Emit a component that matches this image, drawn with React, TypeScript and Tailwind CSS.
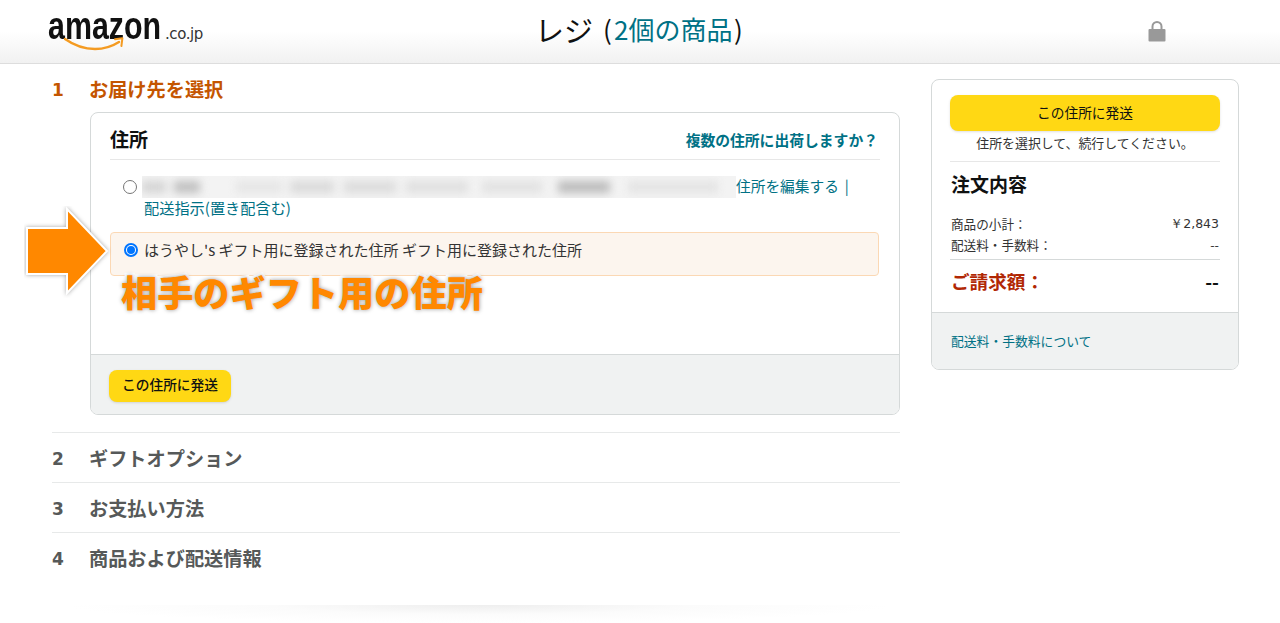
import React from "react";

const font = { fontFamily: '"Noto Sans CJK JP", "Noto Sans", sans-serif' };

function Logo() {
  return (
    <div className="relative w-[170px] h-[52px] mt-[7px] ml-[48px]">
      <div className="flex items-baseline">
        <span className="text-[38px] leading-[38px] font-bold text-[#111] [font-family:'Liberation_Sans',sans-serif] [transform:scaleX(0.8)] origin-left block w-[117px]">amazon</span>
        <span className="text-[15px] leading-[15px] text-[#333] [font-family:'DejaVu_Sans',sans-serif] tracking-[-0.4px]">.co.jp</span>
      </div>
      <svg className="absolute left-[16px] top-[30px]" width="62" height="16" viewBox="0 0 62 16" fill="none">
        <path d="M1 2C11 9 21 12 31 12C40 12 48 9.5 55 5" stroke="#f49b22" strokeWidth="2.4" strokeLinecap="round" />
        <path d="M51 2.2L58.4 1.2L57.4 9" stroke="#f49b22" strokeWidth="2" strokeLinejoin="round" strokeLinecap="round" />
      </svg>
    </div>
  );
}

function Step({ n, label }: { n: number; label: string }) {
  return (
    <div className="flex items-center h-[50px] border-t border-[#e7e9e9]">
      <span className="w-[37px] pt-[4px] text-[17px] font-bold text-[#565959] [font-family:'DejaVu_Sans',sans-serif]">{n}</span>
      <span className="pt-[2px] text-[19.2px] font-bold text-[#565959]">{label}</span>
    </div>
  );
}

function Blurred() {
  const bars = [
    ["w-[24px]", "bg-[#d4d4d4]"], ["w-[8px]", "bg-transparent"], ["w-[26px]", "bg-[#c0c0c0]"], ["w-[36px]", "bg-transparent"],
    ["w-[46px]", "bg-[#e6e6e6]"], ["w-[8px]", "bg-transparent"], ["w-[44px]", "bg-[#dadada]"], ["w-[10px]", "bg-transparent"],
    ["w-[52px]", "bg-[#dcdcdc]"], ["w-[10px]", "bg-transparent"], ["w-[62px]", "bg-[#e0e0e0]"], ["w-[14px]", "bg-transparent"],
    ["w-[60px]", "bg-[#e2e2e2]"], ["w-[16px]", "bg-transparent"], ["w-[52px]", "bg-[#bcbcbc]"], ["w-[18px]", "bg-transparent"],
    ["w-[90px]", "bg-[#e4e4e4]"],
  ];
  return (
    <div className="w-[594px] h-[22px] bg-[#f3f3f3] overflow-hidden shrink-0">
      <div className="flex h-[12px] mt-[5px] blur-[4px]">
        {bars.map(([w, c], i) => (
          <div key={i} className={`${w} ${c} shrink-0 h-full`} />
        ))}
      </div>
    </div>
  );
}

export default function App() {
  return (
    <div style={font} className="relative w-[1280px] h-[623px] overflow-hidden bg-white text-[#0f1111]">
      <header className="h-[64px] border-b border-[#dddddd] bg-gradient-to-b from-white via-white to-[#f1f1f1] flex relative">
        <Logo />
        <div className="absolute left-[535px] top-[9px] leading-[40px] whitespace-nowrap flex items-center">
          <span className="text-[29px] text-[#0f1111]">レジ</span>
          <span className="text-[26px] text-[#0f1111] ml-[10px] w-[11px]">(</span>
          <span className="text-[26px] text-[#007185] w-[120px]">2個の商品</span>
          <span className="text-[26px] text-[#0f1111]">)</span>
        </div>
        <svg className="absolute left-[1148px] top-[20px]" width="18" height="22" viewBox="0 0 18 22" fill="none">
          <path d="M4.5 10V6.5a4.5 4.5 0 0 1 9 0V10" stroke="#999" strokeWidth="2" />
          <rect x="0.5" y="9" width="17" height="12.5" rx="1" fill="#999" />
        </svg>
      </header>

      <main className="flex pl-[52px] pr-[41px]">
        <div className="w-[848px] shrink-0">
          <div className="flex items-center h-[48px]">
            <span className="w-[37px] pt-[5px] text-[17px] font-bold text-[#c45500] [font-family:'DejaVu_Sans',sans-serif]">1</span>
            <span className="pt-[2px] text-[19.2px] font-bold text-[#c45500]">お届け先を選択</span>
          </div>
          <section className="ml-[38px] w-[810px] h-[303px] border border-[#d5d9d9] rounded-lg overflow-hidden flex flex-col">
            <div className="flex-1 px-[19px]">
              <div className="h-[47px] pt-[5px] flex items-center justify-between border-b border-[#e7e7e7]">
                <h2 className="pt-[2px] text-[19px] font-bold">住所</h2>
                <a className="pt-[4px] text-[14.8px] font-bold text-[#007185] pr-[2px]">複数の住所に出荷しますか？</a>
              </div>
              <div className="mt-[16px] flex items-center h-[22px] text-[14.7px] whitespace-nowrap">
                <span className="w-[14px] h-[14px] ml-[13px] mr-[5px] rounded-full border border-[#767676] bg-white shrink-0" />
                <Blurred />
                <span className="text-[#007185] -mt-[2px]">住所を編集する</span>
                <span className="text-[#007185] ml-[6px] -mt-[2px]">|</span>
              </div>
              <div className="ml-[34px] -mt-[1px] h-[20px] leading-[20px] text-[15.2px] text-[#007185]">配送指示(置き配含む)</div>
              <div className="mt-[15px] w-[769px] h-[44px] bg-[#fcf5ee] border border-[#fbd8b4] rounded-[4px] flex items-start pt-[6px] pl-[13px] text-[15px] text-[#333] whitespace-nowrap">
                <span className="w-[14px] h-[14px] mt-[4px] mr-[6px] rounded-full border-2 border-[#0075ff] bg-white shrink-0 flex items-center justify-center">
                  <span className="w-[8px] h-[8px] rounded-full bg-[#0075ff]" />
                </span>
                <span className="leading-[22px]">はうやし's ギフト用に登録された住所 ギフト用に登録された住所</span>
              </div>
            </div>
            <div className="h-[60px] bg-[#f0f2f2] border-t border-[#d5d9d9] pl-[18px] pt-[15px]">
              <button className="w-[122px] h-[32px] pb-[3px] rounded-lg bg-[#ffd814] text-[13.7px] font-medium text-[#0f1111] shadow-sm">この住所に発送</button>
            </div>
          </section>
          <div className="mt-[17px]">
            <Step n={2} label="ギフトオプション" />
            <Step n={3} label="お支払い方法" />
            <Step n={4} label="商品および配送情報" />
          </div>
        </div>

        <aside className="ml-[31px] mt-[15px] w-[308px] h-[291px] border border-[#d5d9d9] rounded-lg overflow-hidden flex flex-col shrink-0">
          <div className="flex-1 px-[18px] pt-[15px]">
            <button className="w-full h-[36px] pb-[2px] rounded-lg bg-[#ffd814] text-[13.7px] text-[#0f1111] shadow-sm">この住所に発送</button>
            <p className="text-center text-[12.9px] leading-[24px] text-[#333] h-[31px] border-b border-[#e7e7e7]">住所を選択して、続行してください。</p>
            <h3 className="text-[19px] font-bold leading-[24px] mt-[10px] ml-[1px]">注文内容</h3>
            <div className="mt-[18px] mx-[1px] flex justify-between text-[12.6px] leading-[20px] text-[#333]"><span>商品の小計：</span><span className="[font-family:'DejaVu_Sans',sans-serif] text-[12.5px]">￥2,843</span></div>
            <div className="mt-[1px] flex justify-between text-[12.6px] leading-[20px] text-[#333] pb-[4px] border-b border-[#d5d9d9] pl-[1px] pr-[1px]"><span>配送料・手数料：</span><span>--</span></div>
            <div className="mt-[9px] mx-[1px] flex justify-between items-center text-[18.6px] font-bold leading-[24px]"><span className="text-[#b12704]">ご請求額：</span><span>--</span></div>
          </div>
          <div className="h-[57px] bg-[#f0f2f2] border-t border-[#d5d9d9] px-[19px] flex items-center text-[12.8px] text-[#007185]">配送料・手数料について</div>
        </aside>
      </main>

      {/* annotation */}
      <svg className="absolute left-[24px] top-[206px]" width="90" height="92" viewBox="0 0 90 92" fill="none">
        <path d="M3 22H43V3L83 45L43 87V68H3Z" fill="#ff8800" stroke="#fff" strokeWidth="2" style={{ filter: "drop-shadow(0 0 2px rgba(0,0,0,0.35))" }} />
      </svg>
      <div className="absolute left-[121px] top-[268px] text-[36.2px] leading-[46px] font-black text-[#ff8800] whitespace-nowrap [-webkit-text-stroke:5px_#fff] [paint-order:stroke_fill] [text-shadow:0_0_4px_rgba(0,0,0,0.4)]">
        相手のギフト用の住所
      </div>

      {/* bottom shadow */}
      <div className="absolute left-[65px] top-[605px] w-[830px] h-[18px] [background:radial-gradient(ellipse_50%_100%_at_50%_0%,#eeeeee,#fbfbfb_50%,transparent)]" />
    </div>
  );
}
